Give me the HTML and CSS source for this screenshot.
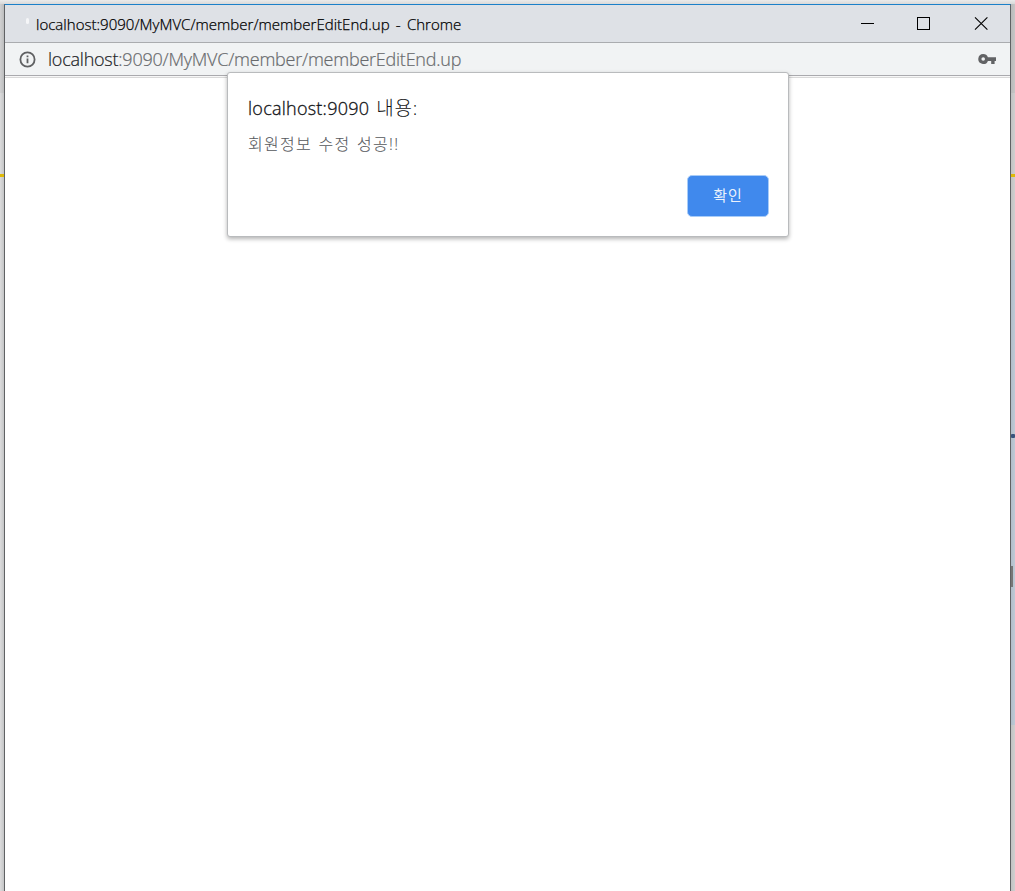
FILE: index.html
```html
<!DOCTYPE html>
<html lang="ko">
<head>
<meta charset="utf-8">
<title>localhost:9090/MyMVC/member/memberEditEnd.up</title>
<link rel="stylesheet" href="styles.css">
</head>
<body>
<div class="desktop">
  <div class="edge edge-left"><i class="band"></i><i class="stripe"></i></div>
  <main class="window">
    <header class="titlebar">
      <span class="spinner"></span>
      <span class="title">localhost:9090/MyMVC/member/memberEditEnd.up - Chrome</span>
      <svg class="controls" width="130" height="16" viewBox="0 0 130 16" fill="none" stroke="#000">
        <path d="M1 8.5H14M57.5 2.5H69.5V14.5H57.5Z" shape-rendering="crispEdges"/>
        <path d="M115 2.3L127.4 14.7M127.4 2.3L115 14.7" stroke-width="1.1"/>
      </svg>
    </header>
    <div class="address">
      <svg class="info" width="18" height="18" viewBox="0 0 18 18">
        <circle cx="8.5" cy="9.5" r="7.1" fill="none" stroke="#5f6062" stroke-width="1.8"/>
        <path d="M7.6 8.5H9.4V13.3H7.6ZM7.6 5.5H9.4V7.3H7.6Z" fill="#5f6062"/>
      </svg>
      <span class="url"><b>localhost</b>:9090/MyMVC/member/memberEditEnd.up</span>
      <svg class="key" width="18" height="12" viewBox="0 0 18 12">
        <path fill-rule="evenodd" fill="#626365" d="M5.2 1A5 5 0 1 0 9.9 7.9H13.2V11H16.6V7.9H18V4.2H9.9A5 5 0 0 0 5.2 1ZM5.2 4.2A1.8 1.8 0 1 1 5.2 7.8A1.8 1.8 0 0 1 5.2 4.2Z"/>
      </svg>
    </div>
    <div class="page"></div>
  </main>
  <div class="edge edge-right"><i class="band"></i><i class="stripe"></i><i class="panel"></i><i class="dot"></i><i class="thumb"></i></div>
  <section class="dialog">
    <h1><span class="host">localhost:9090</span><span class="suffix">내용:</span></h1>
    <p>회원정보 수정 성공!!</p>
    <button>확인</button>
  </section>
</div>
</body>
</html>
```
FILE: styles.css
```css
* { box-sizing: border-box; }
body { margin: 0; overflow: hidden; font-family: "Open Sans", "Noto Sans CJK KR", sans-serif; }
.desktop { position: relative; display: flex; width: 1015px; height: 891px; padding-top: 4px; background: linear-gradient(#ebebeb, #d9d9d9 4px); }
.edge { position: relative; height: 887px; flex: none; }
.edge i { position: absolute; left: 0; right: 0; }
.edge-left { width: 4px; background: linear-gradient(90deg, #dcdcdd, #c4c5c6); }
.edge-right { width: 4px; background: linear-gradient(90deg, #c2c2c2, #d0d0d0); }
.band { top: 0; height: 89px; background: rgba(120,120,120,.1); }
.stripe { top: 170px; height: 3px; background: #dfba08; }
.edge .panel { top: 256px; height: 465px; background: linear-gradient(90deg, #b1bdc9, #becbd7); }
.edge .dot { top: 430px; height: 4px; background: #38537c; border-radius: 1px; }
.edge .thumb { top: 562px; height: 21px; right: 2px; background: #777; }
.window { width: 1007px; height: 887px; flex: none; display: flex; flex-direction: column; border: 1px solid #606264; border-top-color: #1b80c9; border-bottom: 0; background: #fff; }
.titlebar { height: 38px; flex: none; display: flex; align-items: center; padding-left: 21px; background: #dee1e6; border-bottom: 1px solid #aaacaf; }
.spinner { width: 3px; height: 6px; margin: -5px 7px 0 0; border-radius: 2px; background: #f5f6f8; }
.title { width: 430px; font-size: 15px; font-weight: 300; line-height: 20px; letter-spacing: .02px; word-spacing: 2.3px; color: #000; white-space: nowrap; -webkit-text-stroke: .25px; }
.controls { margin-left: auto; margin-right: 20px; margin-top: -2px; }
.address { height: 33px; flex: none; display: flex; align-items: center; padding: 0 14px 0 14px; background: #f1f3f4; border-bottom: 1px solid #aaaaae; }
.url { margin-left: 11px; font-size: 18px; font-weight: 300; line-height: 24px; letter-spacing: -.23px; color: #686a6d; white-space: nowrap; -webkit-text-stroke: .2px; }
.url b { color: #202124; font-weight: 300; }
.key { margin-left: auto; }
.page { flex: 1; border-top: 1px solid #f7f7f7; box-shadow: inset 0 1px #d9d9d9; }
.dialog { position: absolute; left: 227px; top: 72px; width: 562px; height: 165px; display: flex; flex-direction: column; padding: 23px 20px 20px; border: 1px solid #b9bbbd; border-radius: 3px; background: #fff; box-shadow: 0 2px 4px rgba(0,0,0,.3); }
h1 { display: flex; align-items: center; gap: 7px; margin: 0; font-size: 18px; font-weight: 300; line-height: 24px; color: #101114; white-space: nowrap; -webkit-text-stroke: .3px; }
.host { letter-spacing: .25px; }
.suffix { font-size: 19px; letter-spacing: .8px; -webkit-text-stroke: 0; }
p { margin: 13px 0 0; font-size: 16px; font-weight: 300; line-height: 22px; letter-spacing: 1.3px; word-spacing: 1px; color: #55585c; white-space: nowrap; -webkit-text-stroke: .1px; }
button { align-self: flex-end; width: 82px; height: 42px; margin: auto -1px -1px 0; padding: 0 0 4px; border: 1px solid #a8ccf8; border-radius: 5px; background: #4089ed; color: #fff; font: 300 15px "Noto Sans CJK KR", sans-serif; letter-spacing: 1px; -webkit-text-stroke: .2px; }
```
